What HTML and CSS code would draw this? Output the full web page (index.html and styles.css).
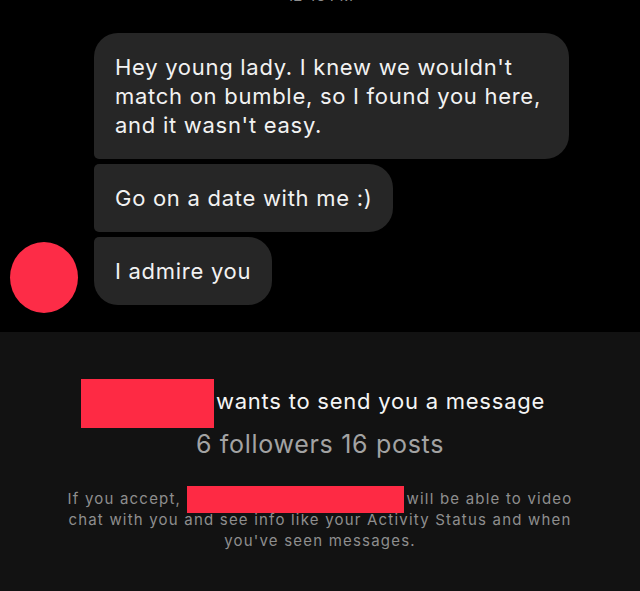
FILE: index.html
```html
<!DOCTYPE html>
<html lang="en">
<head>
  <meta charset="UTF-8" />
  <title>Message request</title>
  <link rel="stylesheet" href="styles.css">
</head>
<body>

  <div class="thread">
    <div class="timestamp">12:48 PM</div>

    <div class="group">
      <div class="avatar"></div>
      <div class="bubbles">
        <div class="bubble first">Hey young lady. I knew we wouldn't<br>match on bumble, so I found you here,<br>and it wasn't easy.</div>
        <div class="bubble middle">Go on a date with me :)</div>
        <div class="bubble last">I admire you</div>
      </div>
    </div>
  </div>

  <div class="request">
    <div class="headline"><span class="redact big"></span>wants to send you a message</div>
    <div class="stats">6 followers 16 posts</div>
    <p class="note">If you accept, <span class="redact small"></span>will be able to video<br>chat with you and see info like your Activity Status and when<br>you've seen messages.</p>
  </div>

</body>
</html>
```

FILE: styles.css
```css
body {
  margin: 0;
  width: 640px;
  height: 591px;
  overflow: hidden;
  background: #000;
  font-family: Inter, "Liberation Sans", sans-serif;
  color: #f2f2f2;
}

.thread {
  height: 332px;
  overflow: hidden;
}

.timestamp {
  margin-top: -13px;
  height: 18px;
  line-height: 18px;
  font-size: 15px;
  color: #8e8e8e;
  text-align: center;
}

.group {
  display: flex;
  align-items: flex-end;
  gap: 16px;
  padding: 28px 0 0 10px;
}

.avatar {
  width: 68px;
  height: 71px;
  border-radius: 50%;
  background: #fd2c47;
  margin-bottom: -8px;
  flex-shrink: 0;
}

.bubbles {
  display: flex;
  flex-direction: column;
  align-items: flex-start;
  gap: 5px;
}

.bubble {
  background: #262626;
  padding: 20px 21px 19px;
  font-size: 22px;
  line-height: 29px;
  letter-spacing: 0.72px;
  border-radius: 5px 24px 24px 5px;
}

.bubble.first {
  border-top-left-radius: 24px;
  padding-right: 28px;
}

.bubble.last {
  border-bottom-left-radius: 24px;
}

.request {
  background: #121212;
  height: 259px;
  padding-top: 45px;
  box-sizing: border-box;
  text-align: center;
}

.headline {
  font-size: 22px;
  line-height: 49px;
  height: 49px;
  padding-right: 14px;
  letter-spacing: 0.77px;
  color: #f5f5f5;
}

.redact {
  display: inline-block;
  background: #fe2a44;
  vertical-align: middle;
}

.redact.big {
  width: 133px;
  height: 49px;
  margin-right: 2px;
}

.redact.small {
  width: 217px;
  height: 27px;
  margin: -4px 3px -4px 0;
}

.stats {
  margin-top: 3px;
  font-size: 25px;
  line-height: 30px;
  letter-spacing: 0.7px;
  color: #a3a3a3;
}

.note {
  margin: 29px 0 0;
  font-size: 15px;
  line-height: 21px;
  letter-spacing: 1.2px;
  color: #8e8e8e;
}
```
